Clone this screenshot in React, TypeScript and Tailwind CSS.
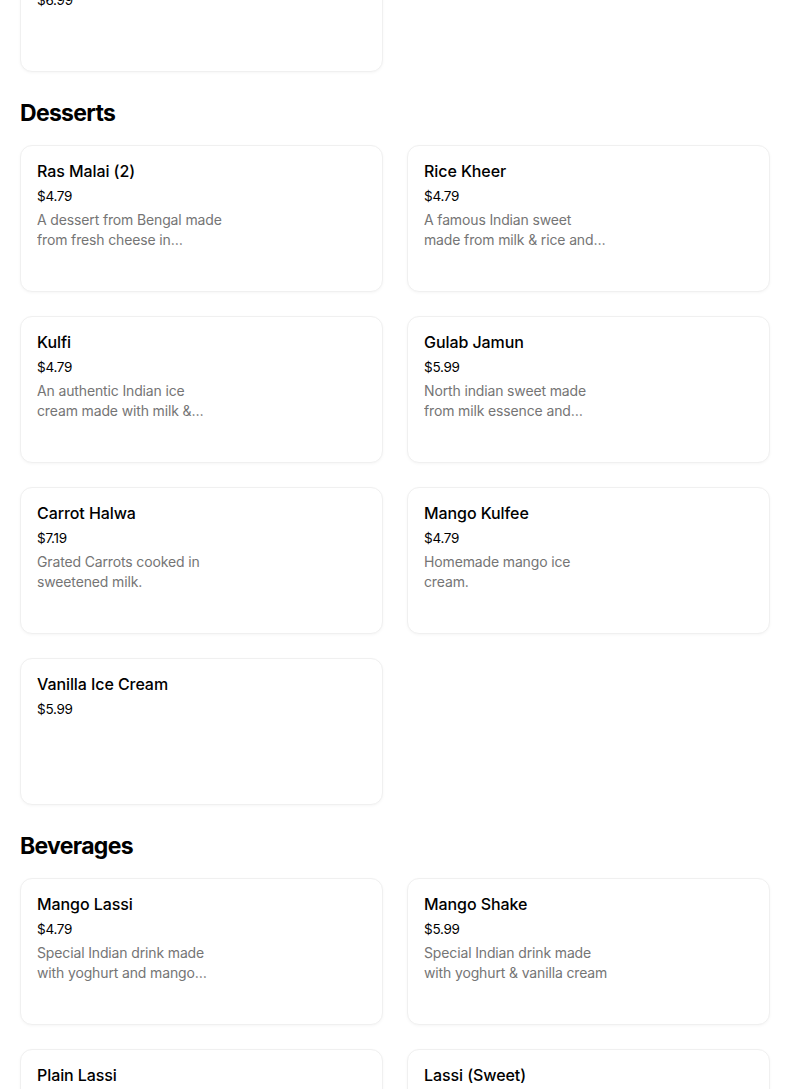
import React from "react";

interface MenuItem {
  name: string;
  price: string;
  description?: string;
}

interface Section {
  title?: string;
  items: MenuItem[];
}

const sections: Section[] = [
  {
    items: [
      {
        name: "Chicken Biryani with Raita and Salad (Large)",
        price: "$6.99",
      },
    ],
  },
  {
    title: "Desserts",
    items: [
      {
        name: "Ras Malai (2)",
        price: "$4.79",
        description: "A dessert from Bengal made from fresh cheese in sweetened milk.",
      },
      {
        name: "Rice Kheer",
        price: "$4.79",
        description: "A famous Indian sweet made from milk & rice and garnished with nuts.",
      },
      {
        name: "Kulfi",
        price: "$4.79",
        description: "An authentic Indian ice cream made with milk & pistachios.",
      },
      {
        name: "Gulab Jamun",
        price: "$5.99",
        description: "North indian sweet made from milk essence and soaked in syrup.",
      },
      {
        name: "Carrot Halwa",
        price: "$7.19",
        description: "Grated Carrots cooked in sweetened milk.",
      },
      {
        name: "Mango Kulfee",
        price: "$4.79",
        description: "Homemade mango ice cream.",
      },
      { name: "Vanilla Ice Cream", price: "$5.99" },
    ],
  },
  {
    title: "Beverages",
    items: [
      {
        name: "Mango Lassi",
        price: "$4.79",
        description: "Special Indian drink made with yoghurt and mango pulp.",
      },
      {
        name: "Mango Shake",
        price: "$5.99",
        description: "Special Indian drink made with yoghurt & vanilla cream",
      },
      {
        name: "Plain Lassi",
        price: "$4.79",
        description: "Special Indian drink made with yoghurt.",
      },
      {
        name: "Lassi (Sweet)",
        price: "$4.79",
        description: "Special Indian drink made with sweetened yoghurt.",
      },
    ],
  },
];

const ItemCard: React.FC<{ item: MenuItem }> = ({ item }) => (
  <button className="flex h-[147px] flex-col items-start rounded-xl border border-[#f0f0f0] bg-white px-4 pt-[13px] text-left shadow-[0_1px_3px_rgba(0,0,0,0.04)]">
    <div className="text-base font-medium leading-6 tracking-[-0.005em] text-black">
      {item.name}
    </div>
    <div className="mt-[3px] text-[13.5px] leading-5 tracking-[-0.02em] text-black">
      {item.price}
    </div>
    {item.description && (
      <div className="mt-1 line-clamp-2 w-[186px] text-sm leading-5 tracking-[-0.01em] text-[#757575]">
        {item.description}
      </div>
    )}
  </button>
);

export default function App() {
  return (
    <div
      className="min-h-screen overflow-hidden bg-white"
      style={{ fontFamily: "Inter, 'Liberation Sans', sans-serif" }}
    >
      {/* page is scrolled: the previous section's last card sits above the fold */}
      <div className="ml-5 mt-[-75px] w-[750px]">
        {sections.map((section, i) => (
          <section key={i} className={i > 0 ? "mt-[25px]" : ""}>
            {section.title && (
              <h2 className="mb-4 text-[23px] font-bold leading-8 tracking-[-0.03em] text-black">
                {section.title}
              </h2>
            )}
            <div className="grid grid-cols-2 gap-6">
              {section.items.map((item) => (
                <ItemCard key={item.name} item={item} />
              ))}
            </div>
          </section>
        ))}
      </div>
    </div>
  );
}
